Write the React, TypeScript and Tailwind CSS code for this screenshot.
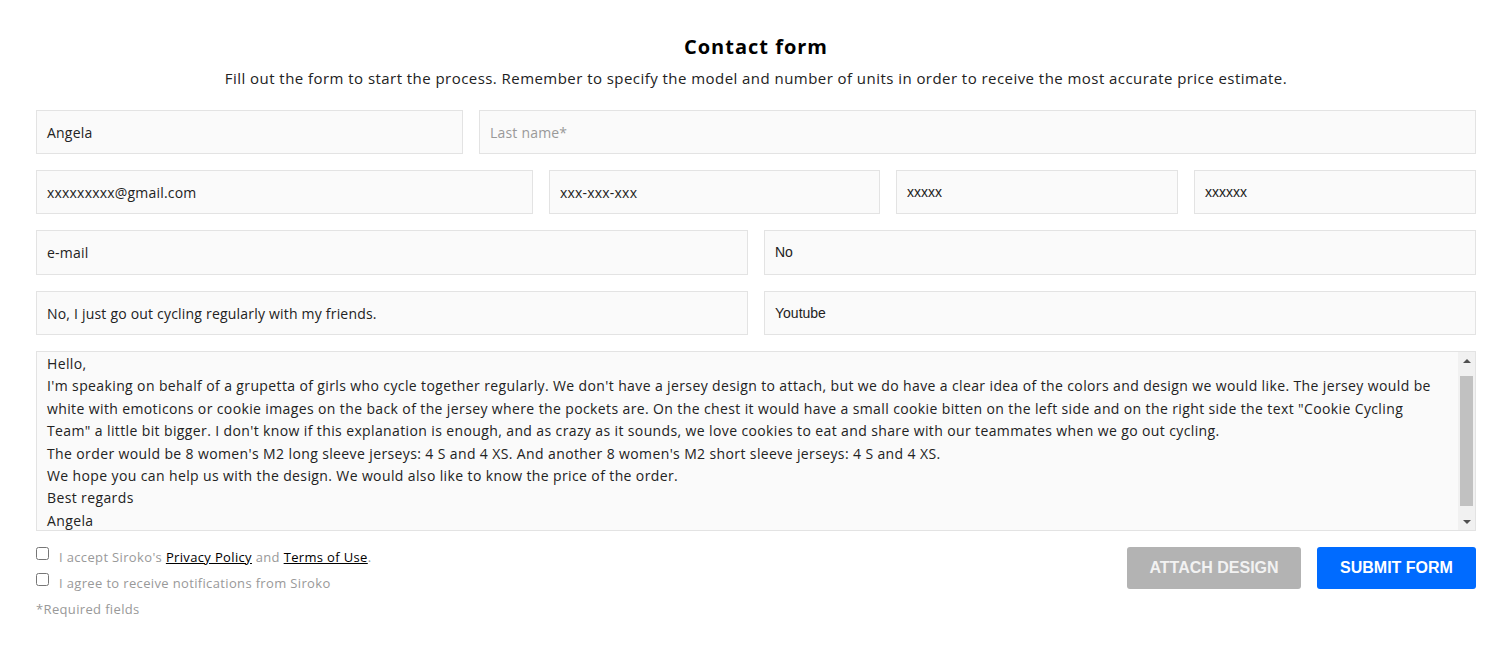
import React from 'react';

const sans = "font-['Open_Sans',sans-serif]";
const arial = "font-['Liberation_Sans',Arial,sans-serif]";

const Field = ({ value, placeholder, width, select, tall }: { value?: string; placeholder?: string; width: string; select?: boolean; tall?: boolean }) => (
  <div
    className={`${width} ${tall ? 'h-[45px]' : 'h-[44px]'} shrink-0 flex items-center px-[10px] bg-[#fafafa] border border-[#e3e3e3] ${
      select ? `${arial} text-[14px]` : `${sans} text-[14px] tracking-[0.2px]`
    } ${value ? 'text-[#222]' : 'text-[#999]'}`}
  >
    {value || placeholder}
  </div>
);

const message = [
  'Hello,',
  "I'm speaking on behalf of a grupetta of girls who cycle together regularly. We don't have a jersey design to attach, but we do have a clear idea of the colors and design we would like. The jersey would be",
  'white with emoticons or cookie images on the back of the jersey where the pockets are. On the chest it would have a small cookie bitten on the left side and on the right side the text "Cookie Cycling',
  'Team" a little bit bigger. I don\'t know if this explanation is enough, and as crazy as it sounds, we love cookies to eat and share with our teammates when we go out cycling.',
  "The order would be 8 women's M2 long sleeve jerseys: 4 S and 4 XS. And another 8 women's M2 short sleeve jerseys: 4 S and 4 XS.",
  'We hope you can help us with the design. We would also like to know the price of the order.',
  'Best regards',
  'Angela',
];

export default function App() {
  return (
    <div className={`min-h-[654px] bg-white ${sans} text-[#222]`}>
      <div className="ml-[36px] w-[1440px] pt-[33px]">
        <h1 className="text-center text-[20px] leading-[28px] font-bold tracking-[1px] text-black">Contact form</h1>
        <p className="mt-[7px] text-center text-[15px] leading-[20px] tracking-[0.45px] text-[#222]">
          Fill out the form to start the process. Remember to specify the model and number of units in order to receive the most accurate price estimate.
        </p>

        <div className="mt-[22px] flex flex-col gap-[16px]">
          <div className="flex gap-[16px]">
            <Field width="w-[427px]" value="Angela" />
            <Field width="flex-1" placeholder="Last name*" />
          </div>
          <div className="flex gap-[16px]">
            <Field width="w-[497px]" value="xxxxxxxxx@gmail.com" />
            <Field width="w-[331px]" value="xxx-xxx-xxx" />
            <Field width="w-[282px]" value="xxxxx" select />
            <Field width="w-[282px]" value="xxxxxx" select />
          </div>
          <div className="flex gap-[16px]">
            <Field width="flex-1" value="e-mail" tall />
            <Field width="flex-1" value="No" select tall />
          </div>
          <div className="flex gap-[16px]">
            <Field width="flex-1" value="No, I just go out cycling regularly with my friends." />
            <Field width="flex-1" value="Youtube" select />
          </div>

          {/* message box */}
          <div className="h-[180px] flex bg-[#fafafa] border border-[#e3e3e3] overflow-hidden">
            <div className="flex-1 pl-[10px] pt-[1px] text-[14px] leading-[22.4px] tracking-[0.38px] overflow-hidden">
              {message.map((line, i) => (
                <div key={i} className="whitespace-nowrap">{line}</div>
              ))}
            </div>
            <div className="w-[17px] bg-[#f1f1f1] flex flex-col items-center">
              <div className="h-[17px] flex items-center justify-center">
                <div className="w-0 h-0 border-l-[4px] border-r-[4px] border-b-[4px] border-l-transparent border-r-transparent border-b-[#505050]" />
              </div>
              <div className="w-[13px] h-[130px] mt-[7px] bg-[#c1c1c1]" />
              <div className="flex-1" />
              <div className="h-[17px] flex items-center justify-center">
                <div className="w-0 h-0 border-l-[4px] border-r-[4px] border-t-[4px] border-l-transparent border-r-transparent border-t-[#505050]" />
              </div>
            </div>
          </div>
        </div>

        <div className="mt-[16px] flex justify-between">
          <div className="text-[13px] tracking-[0.35px] text-[#999]">
            <label className="flex items-start gap-[10px] h-[20px]">
              <input type="checkbox" className="w-[13px] h-[13px] m-0" />
              <span className="leading-[20px]">
                I accept Siroko's <span className="text-black underline">Privacy Policy</span> and{' '}
                <span className="text-black underline">Terms of Use</span>.
              </span>
            </label>
            <label className="flex items-start gap-[10px] h-[20px] mt-[6px]">
              <input type="checkbox" className="w-[13px] h-[13px] m-0" />
              <span className="leading-[20px]">I agree to receive notifications from Siroko</span>
            </label>
            <div className="mt-[6px] leading-[20px]">*Required fields</div>
          </div>
          <div className="flex gap-[16px] items-start">
            <button className={`${arial} w-[174px] h-[42px] rounded-[3px] bg-[#b3b3b3] text-[#f2f2f2] font-bold text-[16px] uppercase`}>
              Attach design
            </button>
            <button className={`${arial} w-[159px] h-[42px] rounded-[3px] bg-[#006bff] text-white font-bold text-[16px] uppercase`}>
              Submit form
            </button>
          </div>
        </div>
      </div>
    </div>
  );
}
